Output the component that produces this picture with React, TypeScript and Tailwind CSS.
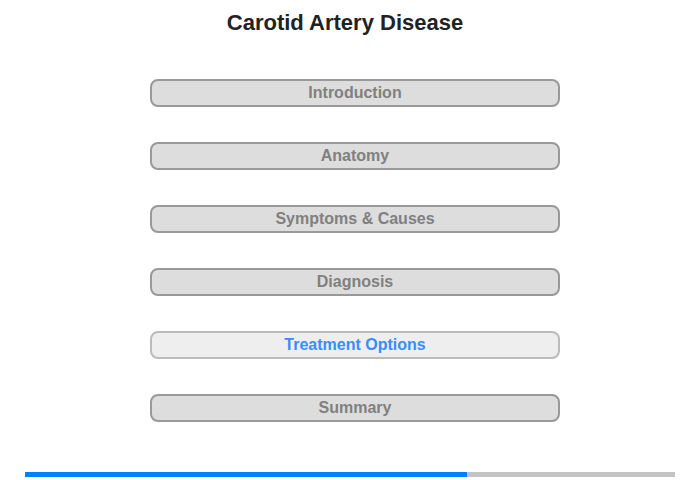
export default function App() {
  const items = ["Introduction", "Anatomy", "Symptoms & Causes", "Diagnosis", "Treatment Options", "Summary"];
  return (
    <div className="w-[700px] h-[480px] bg-white flex flex-col items-center" style={{ fontFamily: '"Liberation Sans", Arial, sans-serif' }}>
      <h1 className="mt-[10px] mr-[10px] h-[26px] leading-[26px] text-[22px] font-bold text-[#222]">Carotid Artery Disease</h1>
      <div className="mt-[43px] ml-[10px] flex flex-col gap-[35px]">
        {items.map((t) =>
          t === "Treatment Options" ? (
            <div key={t} className="w-[410px] h-[28px] rounded-[8px] border-2 border-[#bbb] bg-[#eee] flex items-center justify-center text-[16px] font-bold text-[#3a8cff]">{t}</div>
          ) : (
            <div key={t} className="w-[410px] h-[28px] rounded-[8px] border-2 border-[#999] bg-[#ddd] flex items-center justify-center text-[16px] font-bold text-[#808080]">{t}</div>
          )
        )}
      </div>
      <div className="mt-auto mb-[3px] w-[650px] h-[5px] flex bg-[#c4c4c4]">
        <div className="w-[442px] h-full bg-[#0080ff]" />
      </div>
    </div>
  );
}
